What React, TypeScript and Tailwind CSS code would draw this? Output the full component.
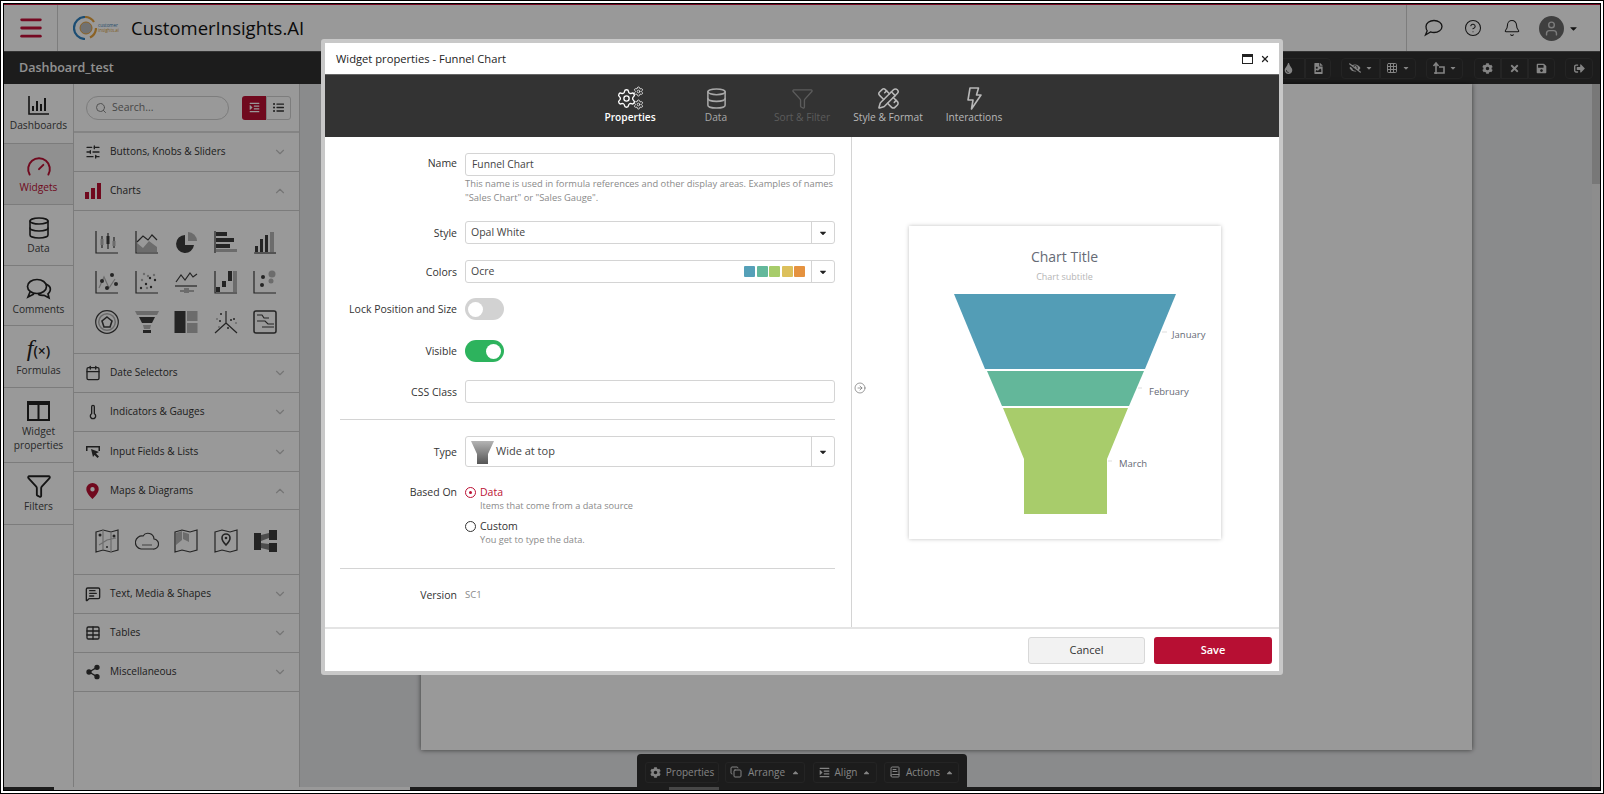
import React from 'react';
import {
  Bell, BookText, ChevronDown, ChevronUp, CircleArrowRight, CircleHelp, Copy, Database, Funnel, Grid3x3,
  MessageSquareText, Menu, PencilRuler, Search, Settings, Share2, SlidersHorizontal,
  Table, Thermometer, User, X, Calendar, Gauge,
} from 'lucide-react';
import {
  FaCog, FaEyeSlash, FaFileImage, FaSave, FaSignOutAlt, FaTimes, FaTint, FaIndent, FaListUl, FaCaretDown, FaCaretUp,
} from 'react-icons/fa';

const D = '#3d3d3d';
const L = '#b4b4b4';

// 24px 위젯 아이콘
const Ic: React.FC<{ children: React.ReactNode }> = ({ children }) => (
  <svg width="24" height="24" viewBox="0 0 24 24" fill="none" stroke={D} strokeWidth="1.2">{children}</svg>
);

const chartIcons = [
  <Ic><path d="M1 1v22h22" /><path d="M7 6v12M13 3v16M19 7v11" /><rect x="5.5" y="9" width="3" height="6" fill={L} stroke="none" /><rect x="11.5" y="6" width="3" height="8" fill={D} stroke="none" /><rect x="17.5" y="11" width="3" height="5" fill={L} stroke="none" /></Ic>,
  <Ic><path d="M1 1v22h22" /><path d="M2 22v-9l6 5 6-7 8 6v5z" fill={L} stroke="none" /><path d="M2 12l6-6 5 4 4-5 5 5" /></Ic>,
  <Ic><path d="M11 5a9 9 0 1 0 9 10h-9z" fill={D} stroke="none" /><path d="M14 2a9 9 0 0 1 9 9h-9z" fill={L} stroke="none" /></Ic>,
  <Ic><path d="M1 1v22" /><rect x="2" y="2" width="11" height="4" fill={D} stroke="none" /><rect x="2" y="8" width="18" height="4" fill={D} stroke="none" /><rect x="2" y="14" width="14" height="4" fill={D} stroke="none" /><rect x="2" y="19" width="21" height="3" fill={L} stroke="none" /></Ic>,
  <Ic><path d="M1 23h22" /><rect x="2" y="16" width="3" height="6" fill={D} stroke="none" /><rect x="7" y="9" width="3" height="13" fill={D} stroke="none" /><rect x="12" y="5" width="3" height="17" fill={D} stroke="none" /><rect x="17" y="2" width="4" height="20" fill={L} stroke="none" /></Ic>,
  <Ic><path d="M1 1v22h22" /><path d="M4 18l5-11 5 11 6-9" stroke={L} /><circle cx="7" cy="11" r="2" fill={D} stroke="none" /><circle cx="12" cy="18" r="2" fill={D} stroke="none" /><circle cx="17" cy="5" r="2" fill={D} stroke="none" /><circle cx="21" cy="14" r="2" fill={D} stroke="none" /></Ic>,
  <Ic><path d="M1 1v22h22" /><g fill={D} stroke="none"><circle cx="6" cy="18" r="1.2" /><circle cx="11" cy="14" r="1.2" /><circle cx="16" cy="17" r="1.2" /><circle cx="20" cy="10" r="1.2" /><circle cx="15" cy="8" r="1.2" /></g><g fill={L} stroke="none"><circle cx="9" cy="4" r="1.2" /><circle cx="13" cy="6" r="1.2" /><circle cx="7" cy="10" r="1.2" /><circle cx="19" cy="5" r="1.2" /><circle cx="12" cy="18" r="1.2" /></g></Ic>,
  <Ic><path d="M1 16h22" /><path d="M2 12l5-7 4 5 5-7 3 4 4-3" /><path d="M6 21h14" stroke={L} strokeWidth="2" /><rect x="10" y="18" width="5" height="5" fill={L} stroke="none" /></Ic>,
  <Ic><path d="M1 1v22h22" /><rect x="2" y="17" width="4" height="5" fill={D} stroke="none" /><rect x="8" y="11" width="4" height="6" fill={D} stroke="none" /><rect x="14" y="1" width="4" height="10" fill={D} stroke="none" /><rect x="19" y="1" width="4" height="21" fill={L} stroke="none" /></Ic>,
  <Ic><path d="M1 1v22h22" /><circle cx="19" cy="4" r="3.5" fill={L} stroke="none" /><circle cx="18" cy="11" r="2.5" fill={L} stroke="none" /><circle cx="10" cy="7" r="2" fill={D} stroke="none" /><circle cx="9" cy="15" r="2" fill={D} stroke="none" /></Ic>,
  <Ic><circle cx="12" cy="12" r="11.3" /><circle cx="12" cy="12" r="8.3" stroke={L} strokeWidth="1.5" /><path d="M12 7l5 4-2 6H9l-2-6z" strokeWidth="1.6" /></Ic>,
  <Ic><path d="M0 1h24l-2 4H2z" fill={L} stroke="none" /><path d="M4 7h16l-3 6H7z" fill={D} stroke="none" /><path d="M8 15h8l-1 4H9z" fill={L} stroke="none" /><rect x="8" y="20" width="8" height="3" fill={D} stroke="none" /></Ic>,
  <Ic><rect x="0.5" y="1" width="11" height="22" fill={D} stroke="none" /><rect x="13" y="1" width="10.5" height="10" fill={L} stroke="none" /><rect x="13" y="13" width="10.5" height="10" fill={L} stroke="none" /></Ic>,
  <Ic><path d="M12 1v12M12 13L1 23M12 13l11 10" /><g fill={D} stroke="none"><circle cx="7" cy="4" r="1" /><circle cx="17" cy="10" r="1" /><circle cx="6" cy="11" r="1" /><circle cx="14" cy="18" r="1" /><circle cx="20" cy="9" r="1" /></g><g fill={L} stroke="none"><circle cx="3" cy="9" r="1" /><circle cx="5" cy="17" r="1" /><circle cx="22" cy="13" r="1" /></g></Ic>,
  <Ic><rect x="1" y="1" width="22" height="22" rx="2" strokeWidth="1.5" /><path d="M4 5h5l2 3h5M4 11h8l3 3h6M9 17h12" /></Ic>,
];

const mapIcons = [
  <Ic><path d="M1 3l7-2 8 2 7-2v20l-7 2-8-2-7 2z" /><path d="M8 1v20M16 3v20M4 16l8-5 9-2" stroke={L} /><circle cx="5" cy="6" r="1.5" fill={D} stroke="none" /><circle cx="19" cy="7" r="1.5" fill={D} stroke="none" /><circle cx="12" cy="18" r="1" fill={D} stroke="none" /></Ic>,
  <Ic><path d="M6 20h12a5 5 0 0 0 1-10 6 6 0 0 0-11-3 5 5 0 0 0-2 13z" /><path d="M7 16h10" stroke={L} strokeWidth="2" /></Ic>,
  <Ic><path d="M1 3l7-2 8 2 7-2v20l-7 2-8-2-7 2z" /><path d="M2 4l6-2v9l-6 5z" fill={L} stroke="none" /><path d="M9 3l6 2v8l-6-3z" fill={L} stroke="none" /></Ic>,
  <Ic><path d="M1 3l7-2 8 2 7-2v20l-7 2-8-2-7 2z" /><path d="M12 16s4-4 4-7a4 4 0 0 0-8 0c0 3 4 7 4 7z" fill="white" strokeWidth="1.6" /><circle cx="12" cy="9" r="1.3" fill={D} stroke="none" /></Ic>,
  <Ic><rect x="1" y="4" width="7" height="17" fill={D} stroke="none" /><rect x="16" y="1" width="8" height="10" fill={D} stroke="none" /><rect x="16" y="14" width="8" height="9" fill={D} stroke="none" /><path d="M8 6l8-2v5l-8 3zM8 14l8 1v6l-8-2z" fill="#808080" stroke="none" /></Ic>,
];

const railItems = [
  { label: ['Dashboards'], h: 'h-[60px] pb-[3px]', icon: <svg width="22" height="21" viewBox="0 0 22 21" fill="none" stroke="#222" strokeWidth="1.6"><path d="M1 1v18h20" /><path d="M5 16V11M9 16V6M13 16V9M17 16V3" strokeWidth="2" /></svg> },
  { label: ['Widgets'], h: 'h-[61px]', active: true, icon: <Gauge size={26} strokeWidth={1.8} color="#bb0f33" /> },
  { label: ['Data'], h: 'h-[61px]', icon: <Database size={24} strokeWidth={1.6} color="#222" /> },
  { label: ['Comments'], h: 'h-[60px]', icon: <svg width="26" height="22" viewBox="0 0 26 22" fill="none" stroke="#222" strokeWidth="1.7"><ellipse cx="11" cy="8.500" rx="9.500" ry="7" /><path d="M4 14l-2 5 6-3" /><path d="M20 6c3.500 1.500 5 4 4 7-.4 1.200-1 2-2 2.800l1 4-5-2.500c-2 .3-4 0-6-1" /></svg> },
  { label: ['Formulas'], h: 'h-[62px]', icon: <span className="font-['Liberation_Serif',serif] italic text-[24px] leading-[24px] text-[#222]">f<span className="not-italic font-['Open_Sans',sans-serif] text-[14px] font-semibold">(×)</span></span> },
  { label: ['Widget', 'properties'], h: 'h-[75px]', icon: <svg width="23" height="20" viewBox="0 0 23 20" fill="none" stroke="#222" strokeWidth="2"><rect x="1" y="1" width="21" height="18" /><path d="M11.500 1v18M1 3h21" /></svg> },
  { label: ['Filters'], h: 'h-[62px] pb-[2px]', icon: <Funnel size={26} strokeWidth={1.7} color="#222" /> },
];

const SectionRow: React.FC<{ icon: React.ReactNode; label: string; open?: boolean; h?: string }> = ({ icon, label, open, h = 'h-[39px]' }) => (
  <div className={`flex items-center ${h} border-b border-[#cfcfcf] pl-[10px] pr-[12px]`}>
    <span className="w-[17px] flex justify-center shrink-0">{icon}</span>
    <span className="ml-[9px] flex-1 text-[10.1px] text-[#333]">{label}</span>
    {open ? <ChevronUp size={14} color="#c4c4c4" /> : <ChevronDown size={14} color="#c4c4c4" />}
  </div>
);

const IconGrid: React.FC<{ items: React.ReactNode[]; h: string }> = ({ items, h }) => (
  <div className={`${h} border-b border-[#cfcfcf] pl-[21px] pt-[19px]`}>
    <div className="grid grid-cols-[repeat(5,24px)] gap-x-[15.5px] gap-y-[16px]">
      {items.map((it, i) => <div key={i} className="h-[24px]">{it}</div>)}
    </div>
  </div>
);

const ToolBtn: React.FC<{ children: React.ReactNode; className?: string }> = ({ children, className = '' }) => (
  <div className={`flex items-center justify-center h-[21px] bg-[#2f2f2f] border border-[#3c3c3c] text-[#dcdcdc] ${className}`}>{children}</div>
);

const Row: React.FC<{ label: string; className?: string; labelClass?: string; children: React.ReactNode }> = ({ label, className = '', labelClass = '', children }) => (
  <div className={`flex ${className}`}>
    <div className={`w-[117px] shrink-0 text-right text-[10.5px] leading-[14px] text-[#333] mr-[8px] ${labelClass}`}>{label}</div>
    <div className="flex-1 min-w-0">{children}</div>
  </div>
);

const SelectBox: React.FC<{ h?: string; children: React.ReactNode }> = ({ h = 'h-[23px]', children }) => (
  <div className={`flex items-center ${h} border border-[#d4d4d4] rounded-[3px] bg-white`}>
    <div className="flex-1 flex items-center pl-[5px] pr-[6px] text-[10.5px] text-[#444] min-w-0">{children}</div>
    <div className="w-[23px] h-full border-l border-[#d4d4d4] flex items-center justify-center"><FaCaretDown size={10} color="#222" /></div>
  </div>
);

const Toggle: React.FC<{ on?: boolean }> = ({ on }) => (
  <div className={`w-[39px] h-[22px] rounded-full flex items-center px-[3px] ${on ? 'bg-[#2db35d] justify-end' : 'bg-[#d2d2d2] justify-start'}`}>
    <div className="w-[15px] h-[15px] rounded-full bg-white" />
  </div>
);

const Tab: React.FC<{ label: string; color: string; icon: React.ReactNode; bold?: boolean }> = ({ label, color, icon, bold }) => (
  <div className="w-[86px] flex flex-col items-center" style={{ color }}>
    <div className="h-[24px] flex items-center justify-center">{icon}</div>
    <div className={`text-[10.2px] leading-[14px] whitespace-nowrap ${bold ? 'font-semibold' : ''}`}>{label}</div>
  </div>
);

const Logo: React.FC = () => (
  <div className="flex items-center">
    <svg width="24" height="24" viewBox="0 0 24 24" fill="none" strokeWidth="2.2">
      <path d="M12 1a11 11 0 0 0 0 22" stroke="#2f80c0" />
      <path d="M12 1a11 11 0 0 1 9 5M23 12a11 11 0 0 1-6 9.500" stroke="#e8a33d" />
      <circle cx="13" cy="12" r="6" fill="#bcbcbc" stroke="#e8a33d" strokeWidth="1" />
    </svg>
    <div className="ml-[1px] text-[4.5px] leading-[5px] w-[24px]">
      <div className="text-[#3b7fb5]">customer</div>
      <div className="text-[#d9a040]">insights.ai</div>
    </div>
  </div>
);

const App: React.FC = () => {
  return (
    <div className="relative w-[1604px] h-[794px] overflow-hidden border-[4px] border-double border-black bg-white font-['Open_Sans',sans-serif]">
      <div className="flex flex-col h-full border-t-[1px] border-[#c4103a]">
        {/* 상단 헤더 */}
        <header className="flex items-center h-[46px] shrink-0 bg-white">
          <div className="w-[54px] h-full flex items-center justify-center border-r border-[#d0d0d0]">
            <Menu size={28} strokeWidth={2.4} color="#c4103a" />
          </div>
          <div className="ml-[15px]"><Logo /></div>
          <div className="ml-[9px] text-[18.5px] font-medium text-[#111]">CustomerInsights.AI</div>
          <div className="flex-1" />
          <div className="w-[194px] h-full border-l border-[#d0d0d0] flex items-center pl-[17px] text-[#222]">
            <svg width="19" height="18" viewBox="0 0 19 18" fill="none" stroke="currentColor" strokeWidth="1.300"><path d="M10 1.500c4.500 0 8 2.700 8 6s-3.500 6-8 6c-1.300 0-2.500-.2-3.500-.6L1.500 16l1.700-4.200C2.400 10.800 2 9.200 2 7.500c0-3.300 3.500-6 8-6z" /></svg>
            <CircleHelp size={18} strokeWidth={1.4} className="ml-[21px]" />
            <Bell size={18} strokeWidth={1.4} className="ml-[21px]" />
            <div className="ml-[18px] w-[25px] h-[25px] rounded-full bg-[#6a6a6a] flex items-center justify-center"><User size={17} color="#cfcfcf" /></div>
            <FaCaretDown size={11} className="ml-[4px]" />
          </div>
        </header>

        {/* 대시보드 툴바 */}
        <div className="flex items-center h-[33px] shrink-0 bg-[#2f2f2f] border-t border-[#555] pl-[15px] pr-[7px]">
          <span className="text-[12.500px] font-semibold text-[#f2f2f2]">Dashboard_test</span>
          <div className="flex-1" />
          <div className="flex items-center">
            <ToolBtn className="w-[30px] pr-[4px] rounded-l-[4px]"><FaTint size={11} /></ToolBtn>
            <ToolBtn className="w-[26px] rounded-r-[4px]"><FaFileImage size={11} /></ToolBtn>
            <ToolBtn className="w-[39px] gap-[4px] ml-[10px] rounded-l-[4px]"><FaEyeSlash size={12} /><FaCaretDown size={8} /></ToolBtn>
            <ToolBtn className="w-[36px] gap-[4px] rounded-r-[4px]"><Grid3x3 size={12} /><FaCaretDown size={8} /></ToolBtn>
            <ToolBtn className="w-[37px] gap-[4px] ml-[10px] rounded-[4px]">
              <svg width="13" height="14" viewBox="0 0 13 14" fill="none" stroke="currentColor" strokeWidth="1.600"><path d="M4 13V2M1.500 5L4 2l2.500 3M7 6h5v6H2" /></svg>
              <FaCaretDown size={8} />
            </ToolBtn>
            <ToolBtn className="w-[27px] ml-[11px] rounded-l-[4px]"><FaCog size={11} /></ToolBtn>
            <ToolBtn className="w-[27px]"><FaTimes size={11} /></ToolBtn>
            <ToolBtn className="w-[27px] rounded-r-[4px]"><FaSave size={11} /></ToolBtn>
            <ToolBtn className="w-[28px] ml-[10px] rounded-[4px]"><FaSignOutAlt size={11} /></ToolBtn>
          </div>
        </div>

        {/* 본문 */}
        <div className="flex flex-1 min-h-0">
          <nav className="w-[70px] shrink-0 border-r border-[#cfcfcf] bg-white">
            {railItems.map((r) => (
              <div key={r.label[0]} className={`${r.h} flex flex-col items-center justify-center border-b border-[#cfcfcf] ${r.active ? 'bg-[#f0f0f0]' : ''}`}>
                <div className="h-[26px] flex items-center">{r.icon}</div>
                {r.label.map((t) => (
                  <div key={t} className={`text-[10.200px] leading-[14px] ${r.active ? 'text-[#bb0f33]' : 'text-[#444]'}`}>{t}</div>
                ))}
              </div>
            ))}
          </nav>

          <aside className="w-[226px] shrink-0 border-r border-[#cfcfcf] bg-white">
            <div className="h-[49px] flex items-center pl-[12px] border-b-2 border-[#dcdcdc]">
              <div className="w-[143px] h-[24px] rounded-full border border-[#d0d0d0] flex items-center pl-[8px] text-[10.5px] text-[#777]">
                <Search size={12} color="#888" />
                <span className="ml-[5px]">Search...</span>
              </div>
              <div className="ml-[13px] flex h-[24px]">
                <div className="w-[24px] bg-[#bb0f33] rounded-l-[3px] flex items-center justify-center"><FaIndent size={11} color="#fff" /></div>
                <div className="w-[25px] border border-[#d0d0d0] rounded-r-[3px] flex items-center justify-center"><FaListUl size={11} color="#333" /></div>
              </div>
            </div>
            <SectionRow icon={<SlidersHorizontal size={16} color="#333" />} label="Buttons, Knobs & Sliders" />
            <SectionRow icon={<svg width="16" height="16" viewBox="0 0 16 16" fill="#bb0f33"><rect x="0" y="9" width="4" height="7" /><rect x="6" y="5" width="4" height="11" /><rect x="12" y="0" width="4" height="16" /></svg>} label="Charts" open />
            <IconGrid items={chartIcons} h="h-[143px]" />
            <SectionRow icon={<Calendar size={16} color="#333" />} label="Date Selectors" />
            <SectionRow icon={<Thermometer size={16} color="#333" />} label="Indicators & Gauges" />
            <SectionRow icon={<svg width="16" height="14" viewBox="0 0 16 14" fill="#333"><path d="M1 1h14v5h-1.500V2.500h-11V6H1z" /><path d="M6 4l8 3-3 1.500 3 3-1.500 1.500-3-3L8 12z" /></svg>} label="Input Fields & Lists" h="h-[40px]" />
            <SectionRow icon={<svg width="13" height="16" viewBox="0 0 13 16" fill="#bb0f33"><path fillRule="evenodd" d="M6.500 0a6.200 6.200 0 0 1 6.200 6.200C12.700 10.500 6.500 16 6.500 16S.3 10.500.3 6.200A6.200 6.200 0 0 1 6.500 0zm0 4a2.200 2.200 0 1 0 0 4.400 2.200 2.200 0 0 0 0-4.400z" /></svg>} label="Maps & Diagrams" open h="h-[38px]" />
            <IconGrid items={mapIcons} h="h-[65px]" />
            <SectionRow icon={<MessageSquareText size={16} color="#333" />} label="Text, Media & Shapes" />
            <SectionRow icon={<Table size={16} color="#333" />} label="Tables" />
            <SectionRow icon={<Share2 size={16} fill="#333" color="#333" />} label="Miscellaneous" />
          </aside>

          <main className="relative flex-1 min-w-0 flex bg-[#e7e8ea] pl-[121px] pr-[128px] pb-[37px]">
            <div className="flex-1 bg-white shadow-[0_0_5px_rgba(0,0,0,0.6)]" />
            <div className="absolute right-0 top-0 bottom-0 w-[8px] bg-[#ececec]">
              <div className="h-[100px] bg-[#c8c8c8]" />
            </div>
          </main>
        </div>
        <div className="h-[3px] shrink-0 flex bg-[#2f2f2f]">
          <div className="ml-[50px] w-[356px] bg-white" />
        </div>
      </div>

      {/* 하단 플로팅 툴바 */}
      <div className="absolute left-[633px] top-[750px] w-[330px] h-[36px] rounded-t-[4px] bg-[#2f2f2f] flex items-center pl-[8px] text-[10px] text-[#dcdcdc]">
        <ToolBtn className="w-[74px] gap-[5px] rounded-[3px]"><FaCog size={11} /> Properties</ToolBtn>
        <ToolBtn className="w-[80px] gap-[6px] ml-[6px] rounded-[3px]"><Copy size={12} /> Arrange <FaCaretUp size={9} /></ToolBtn>
        <ToolBtn className="w-[64px] gap-[5px] ml-[8px] rounded-[3px]"><FaIndent size={11} /> Align <FaCaretUp size={9} /></ToolBtn>
        <ToolBtn className="w-[75px] gap-[5px] ml-[7px] rounded-[3px]"><BookText size={12} /> Actions <FaCaretUp size={9} /></ToolBtn>
        <div className="absolute left-[32px] bottom-0 w-[50px] h-[3px] bg-[#777]" />
      </div>

      {/* 모달 배경 */}
      <div className="absolute inset-0 bg-black/40" />

      {/* 위젯 속성 모달 */}
      <div className="absolute left-[317px] top-[35px] w-[962px] h-[636px] flex flex-col bg-white border-[4px] border-[#c8c8c8] rounded-[3px]">
        <div className="h-[31px] shrink-0 flex items-center pt-[1px] pl-[11px] pr-[9px] text-[11.200px] text-[#222]">
          <span className="flex-1">Widget properties - Funnel Chart</span>
          <svg width="11" height="10" viewBox="0 0 11 10" fill="none" stroke="#222"><rect x="0.5" y="0.5" width="10" height="9" /><rect x="0.5" y="0.5" width="10" height="2" fill="#222" /></svg>
          <X size={10} strokeWidth={3} color="#222" className="ml-[7px]" />
        </div>
        <div className="h-[63px] shrink-0 bg-[#333] border-t border-[#666] flex items-center justify-center pb-[2px]">
          <Tab label="Properties" color="#ffffff" bold icon={
            <div className="relative w-[28px] h-[24px]">
              <Settings size={21} strokeWidth={1.5} className="absolute left-0 top-[2px]" />
              <Settings size={11} strokeWidth={1.6} className="absolute right-0 top-0" />
              <Settings size={11} strokeWidth={1.6} className="absolute right-0 bottom-0" />
            </div>
          } />
          <Tab label="Data" color="#a8a8a8" icon={<Database size={23} strokeWidth={1.6} />} />
          <Tab label="Sort & Filter" color="#5c5c5c" icon={<Funnel size={23} strokeWidth={1.4} />} />
          <Tab label="Style & Format" color="#b8b8b8" icon={<PencilRuler size={23} strokeWidth={1.6} />} />
          <Tab label="Interactions" color="#b8b8b8" icon={
            <svg width="15" height="23" viewBox="0 0 15 23" fill="none" stroke="currentColor" strokeWidth="1.600" strokeLinejoin="round"><path d="M3 1h8.500L9.500 8H14L4.500 22 6 13H1z" /></svg>
          } />
        </div>

        <div className="flex-1 min-h-0 flex">
          <div className="w-[527px] shrink-0 border-r border-[#d4d4d4] pl-[15px] pr-[16px] pt-[16px]">
            <Row label="Name" labelClass="pt-[3px]">
              <div className="h-[23px] border border-[#d4d4d4] rounded-[3px] flex items-center pl-[6px] text-[10.3px] text-[#444]">Funnel Chart</div>
              <div className="mt-[1px] text-[9.350px] leading-[14px] text-[#8a8a8a] whitespace-nowrap">This name is used in formula references and other display areas. Examples of names<br />"Sales Chart" or "Sales Gauge".</div>
            </Row>
            <Row label="Style" className="mt-[16px] items-center"><SelectBox>Opal White</SelectBox></Row>
            <Row label="Colors" className="mt-[16px] items-center">
              <SelectBox>
                <span className="flex-1">Ocre</span>
                <span className="flex gap-[1.5px]">
                  <i className="w-[11px] h-[11px] rounded-[1px] bg-[#55a0b8]" />
                  <i className="w-[11px] h-[11px] rounded-[1px] bg-[#63b89b]" />
                  <i className="w-[11px] h-[11px] rounded-[1px] bg-[#a7cc6a]" />
                  <i className="w-[11px] h-[11px] rounded-[1px] bg-[#dcc05c]" />
                  <i className="w-[11px] h-[11px] rounded-[1px] bg-[#e5923f]" />
                </span>
              </SelectBox>
            </Row>
            <Row label="Lock Position and Size" className="mt-[15px] items-center"><Toggle /></Row>
            <Row label="Visible" className="mt-[20px] items-center"><Toggle on /></Row>
            <Row label="CSS Class" className="mt-[18px] items-center"><div className="h-[23px] border border-[#d4d4d4] rounded-[3px]" /></Row>
            <div className="mt-[16px] border-t border-[#d4d4d4]" />
            <Row label="Type" className="mt-[16px] items-center">
              <SelectBox h="h-[31px]">
                <svg width="23" height="24" viewBox="0 0 23 24"><defs><linearGradient id="fg" x1="0" y1="0" x2="0" y2="1"><stop offset="0" stopColor="#b4b4b4" /><stop offset="1" stopColor="#555" /></linearGradient></defs><path d="M0 1h23l-6 13v10H6V14z" fill="url(#fg)" /></svg>
                <span className="ml-[2px] text-[11px]">Wide at top</span>
              </SelectBox>
            </Row>
            <Row label="Based On" className="mt-[18px]">
              <div className="flex items-center text-[10.5px] leading-[14px] text-[#bb0f33]">
                <span className="w-[11px] h-[11px] rounded-full border border-[#bb0f33] flex items-center justify-center mr-[4px]"><i className="w-[3px] h-[3px] rounded-full bg-[#bb0f33]" /></span>
                Data
              </div>
              <div className="ml-[15px] mt-[1px] text-[9.2px] leading-[12px] text-[#8a8a8a]">Items that come from a data source</div>
              <div className="mt-[7px] flex items-center text-[10.5px] leading-[14px] text-[#333]">
                <span className="w-[11px] h-[11px] rounded-full border border-[#333] mr-[4px]" />
                Custom
              </div>
              <div className="ml-[15px] mt-[1px] text-[9.2px] leading-[12px] text-[#8a8a8a]">You get to type the data.</div>
            </Row>
            <div className="mt-[22px] border-t border-[#d4d4d4]" />
            <Row label="Version" className="mt-[19px]"><div className="text-[9.5px] leading-[14px] text-[#888]">SC1</div></Row>
          </div>

          <div className="relative flex-1 flex items-center justify-center">
            <CircleArrowRight size={12} strokeWidth={1.3} color="#666" className="absolute left-[2px] top-[245px]" />
            <div className="w-[312px] h-[313px] mr-[2px] bg-white shadow-[0_0_4px_rgba(0,0,0,0.25)] flex flex-col items-center pt-[21px]">
              <div className="text-[14px] leading-[20px] text-[#666a75]">Chart Title</div>
              <div className="text-[9px] leading-[12px] mt-[4px] text-[#b5b5b5]">Chart subtitle</div>
              <svg width="312" height="235" viewBox="0 0 312 235" className="mt-[3px]">
                <path d="M45 8h222l-31 75H76z" fill="#539db6" />
                <path d="M78 85h157l-15 35H93z" fill="#63b79a" />
                <path d="M94 122h125l-21 51v55h-83v-55z" fill="#a8cc6b" />
                <path d="M253 46h5M229 102h4M199 175h4" stroke="#ddd" />
                <g fontSize="9.5" fill="#666a75" fontFamily="Open Sans, sans-serif">
                  <text x="263" y="52">January</text>
                  <text x="240" y="109">February</text>
                  <text x="210" y="181">March</text>
                </g>
              </svg>
            </div>
          </div>
        </div>

        <div className="h-[44px] shrink-0 border-t-2 border-[#e4e4e4] flex items-center justify-end pr-[7px] text-[11px]">
          <div className="w-[117px] h-[27px] rounded-[3px] border border-[#d8d8d8] bg-[#f2f2f2] flex items-center justify-center text-[#333]">Cancel</div>
          <div className="ml-[9px] w-[118px] h-[27px] rounded-[3px] bg-[#b70f33] flex items-center justify-center text-white font-semibold">Save</div>
        </div>
      </div>
    </div>
  );
};

export default App;
